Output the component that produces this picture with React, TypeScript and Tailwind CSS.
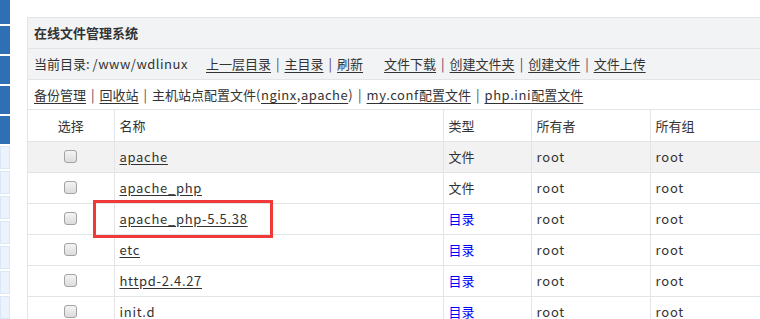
import React from "react";

// Top links on the path row
const navLinks = ["上一层目录", "主目录", "刷新"];
const fileLinks = ["文件下载", "创建文件夹", "创建文件", "文件上传"];

const rows = [
  { name: "apache", type: "文件", dir: false, shade: true },
  { name: "apache_php", type: "文件", dir: false, shade: false },
  { name: "apache_php-5.5.38", type: "目录", dir: true, shade: false },
  { name: "etc", type: "目录", dir: true, shade: false },
  { name: "httpd-2.4.27", type: "目录", dir: true, shade: false },
  { name: "init.d", type: "目录", dir: true, shade: false },
];

function Sep() {
  return <span className="mx-[5px] text-[#5b3a5b]">|</span>;
}

function Checkbox() {
  return (
    <div className="mx-auto h-[13px] w-[13px] rounded-[3px] border border-[#a3a3a3] bg-gradient-to-b from-[#f4f4f4] to-[#dcdcdc]" />
  );
}

export default function App() {
  const font = { fontFamily: '"Noto Sans CJK SC", "Noto Sans", sans-serif' };

  return (
    <div className="flex h-[319px] w-[760px] overflow-hidden bg-white text-[13px] text-[#333]" style={font}>
      {/* left menu strip */}
      <div className="flex w-[10px] shrink-0 flex-col gap-[2px]">
        <div className="h-[24px] bg-[#2f6fb4]" />
        <div className="h-[28px] bg-[#2f6fb4]" />
        <div className="h-[28px] bg-[#2f6fb4]" />
        <div className="h-[28px] bg-[#2f6fb4]" />
        <div className="h-[28px] bg-[#2f6fb4]" />
        {[0, 1, 2, 3, 4, 5, 6].map((i) => (
          <div key={i} className="h-[23px] border border-[#dbe7f7] bg-[#ecf3fd]" />
        ))}
      </div>

      {/* panel */}
      <div className="relative ml-[17px] mt-[17px] w-[760px] shrink-0 border-l border-t border-[#e2e4e8]">
        <div className="flex h-[31px] items-center border-b border-[#e2e4e8] bg-[#f2f3f5] pl-[6px] font-bold">
          在线文件管理系统
        </div>
        <div className="flex h-[31px] items-center border-b border-[#e2e4e8] bg-[#f2f3f5] pl-[6px]">
          <span className="w-[172px]">
            当前目录: <span className="tracking-[0.5px]">/www/wdlinux</span>
          </span>
          {navLinks.map((l, i) => (
            <React.Fragment key={l}>
              {i > 0 && <Sep />}
              <span className="underline underline-offset-[3px]">{l}</span>
            </React.Fragment>
          ))}
          <span className="w-[21px]" />
          {fileLinks.map((l, i) => (
            <React.Fragment key={l}>
              {i > 0 && <Sep />}
              <span className="underline underline-offset-[3px]">{l}</span>
            </React.Fragment>
          ))}
        </div>
        <div className="flex h-[30px] items-center border-b border-[#e2e4e8] pl-[6px]">
          <span className="underline underline-offset-[3px]">备份管理</span>
          <Sep />
          <span className="underline underline-offset-[3px]">回收站</span>
          <Sep />
          <span>
            主机站点配置文件
            <span className="tracking-[0.5px]">
              (<span className="underline underline-offset-[3px]">nginx</span>,
              <span className="underline underline-offset-[3px]">apache</span>)
            </span>
          </span>
          <Sep />
          <span className="underline underline-offset-[3px]">
            <span className="tracking-[0.6px]">my.conf</span>配置文件
          </span>
          <Sep />
          <span className="underline underline-offset-[3px]">
            <span className="tracking-[0.6px]">php.ini</span>配置文件
          </span>
        </div>

        <table className="w-full table-fixed border-collapse">
          <colgroup>
            <col className="w-[86px]" />
            <col className="w-[329px]" />
            <col className="w-[88px]" />
            <col className="w-[119px]" />
            <col />
          </colgroup>
          <thead>
            <tr className="h-[31px] text-left font-normal">
              <th className="border-b border-r border-[#e2e4e8] text-center font-normal">选择</th>
              <th className="border-b border-r border-[#e2e4e8] pl-[5px] font-normal">名称</th>
              <th className="border-b border-r border-[#e2e4e8] pl-[5px] font-normal">类型</th>
              <th className="border-b border-r border-[#e2e4e8] pl-[5px] font-normal">所有者</th>
              <th className="border-b border-[#e2e4e8] pl-[5px] font-normal">所有组</th>
            </tr>
          </thead>
          <tbody>
            {rows.map((r) => (
              <tr key={r.name} className={`h-[31px] ${r.shade ? "bg-[#f2f2f2]" : ""}`}>
                <td className="border-b border-r border-[#e2e4e8]">
                  <Checkbox />
                </td>
                <td className="border-b border-r border-[#e2e4e8] pl-[5px] tracking-[0.7px]">
                  <span className="underline underline-offset-[2px]">{r.name}</span>
                </td>
                <td className={`border-b border-r border-[#e2e4e8] pl-[5px] ${r.dir ? "text-[#0000ff]" : ""}`}>
                  {r.type}
                </td>
                <td className="border-b border-r border-[#e2e4e8] pl-[5px] tracking-[0.8px]">root</td>
                <td className="border-b border-[#e2e4e8] pl-[5px] tracking-[0.8px]">root</td>
              </tr>
            ))}
          </tbody>
        </table>

        {/* red annotation box */}
        <div className="absolute left-[65px] top-[182px] h-[38px] w-[180px] border-[3px] border-[#f03a3a]" />
      </div>
    </div>
  );
}
